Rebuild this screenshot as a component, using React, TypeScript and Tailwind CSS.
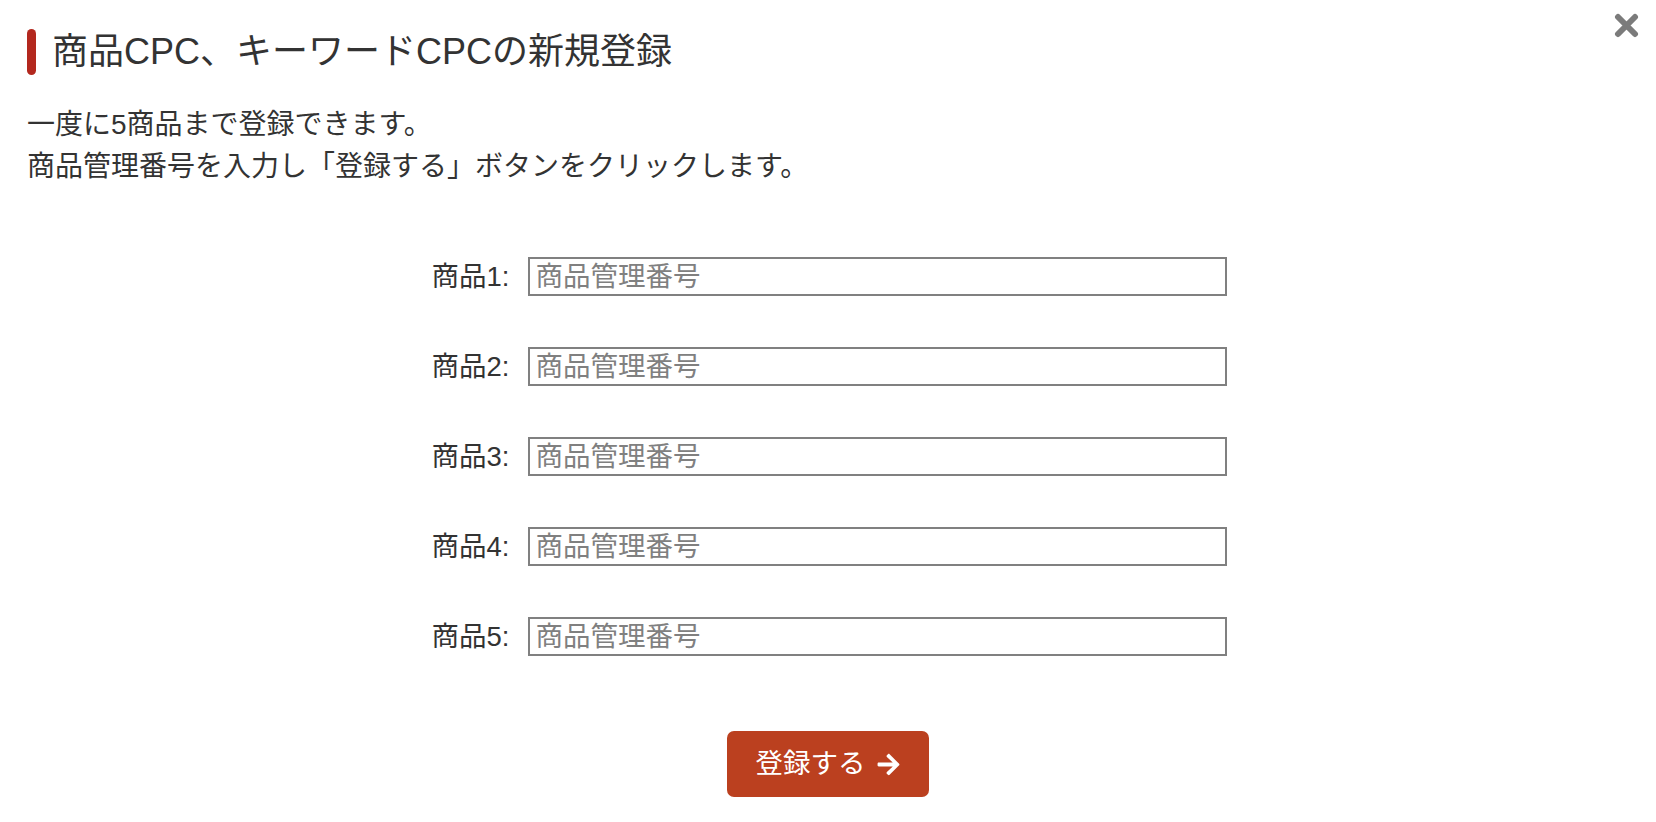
import { FaArrowRight } from "react-icons/fa";

const items = [1, 2, 3, 4, 5];

function App() {
  return (
    <div className="relative min-h-[822px] bg-white text-[#333] font-['Liberation_Sans','Noto_Sans_CJK_JP',sans-serif]">
      <button className="absolute right-[17px] top-[13px] text-[#7b7b7b]">
        <svg width="25" height="25" viewBox="0 0 25 25" fill="none" stroke="currentColor" strokeWidth="6" strokeLinecap="round">
          <path d="M4 4L21 21M21 4L4 21" />
        </svg>
      </button>

      <div className="pl-[27px] pt-[29px]">
        <div className="flex items-center gap-[16px]">
          <span className="w-[9px] h-[46px] rounded-full bg-[#b3281e]"></span>
          <h1 className="text-[36px] leading-[46px] font-normal">商品CPC、キーワードCPCの新規登録</h1>
        </div>
        <p className="mt-[29px] text-[28px] leading-[42px]">
          一度に5商品まで登録できます。
          <br />
          商品管理番号を入力し「登録する」ボタンをクリックします。
        </p>
      </div>

      <div className="mt-[69px] flex flex-col items-center gap-[51px]">
        {items.map((n) => (
          <div key={n} className="flex items-center gap-[18px] pr-[1px]">
            <label className="w-[81px] text-right text-[27.5px] leading-[39px] whitespace-nowrap">
              商品{n}:
            </label>
            <input
              type="text"
              placeholder="商品管理番号"
              className="w-[699px] h-[39px] border-2 border-[#808080] px-[6px] text-[27.5px] placeholder:text-[#808080] outline-none"
            />
          </div>
        ))}
      </div>

      <div className="mt-[75px] flex justify-center">
        <button className="w-[202px] h-[66px] rounded-[7px] bg-[#bb401f] text-white text-[27.5px] flex items-center justify-center gap-[10px]">
          <span>登録する</span>
          <FaArrowRight className="w-[25px] h-[25px]" />
        </button>
      </div>
    </div>
  );
}

export default App;
